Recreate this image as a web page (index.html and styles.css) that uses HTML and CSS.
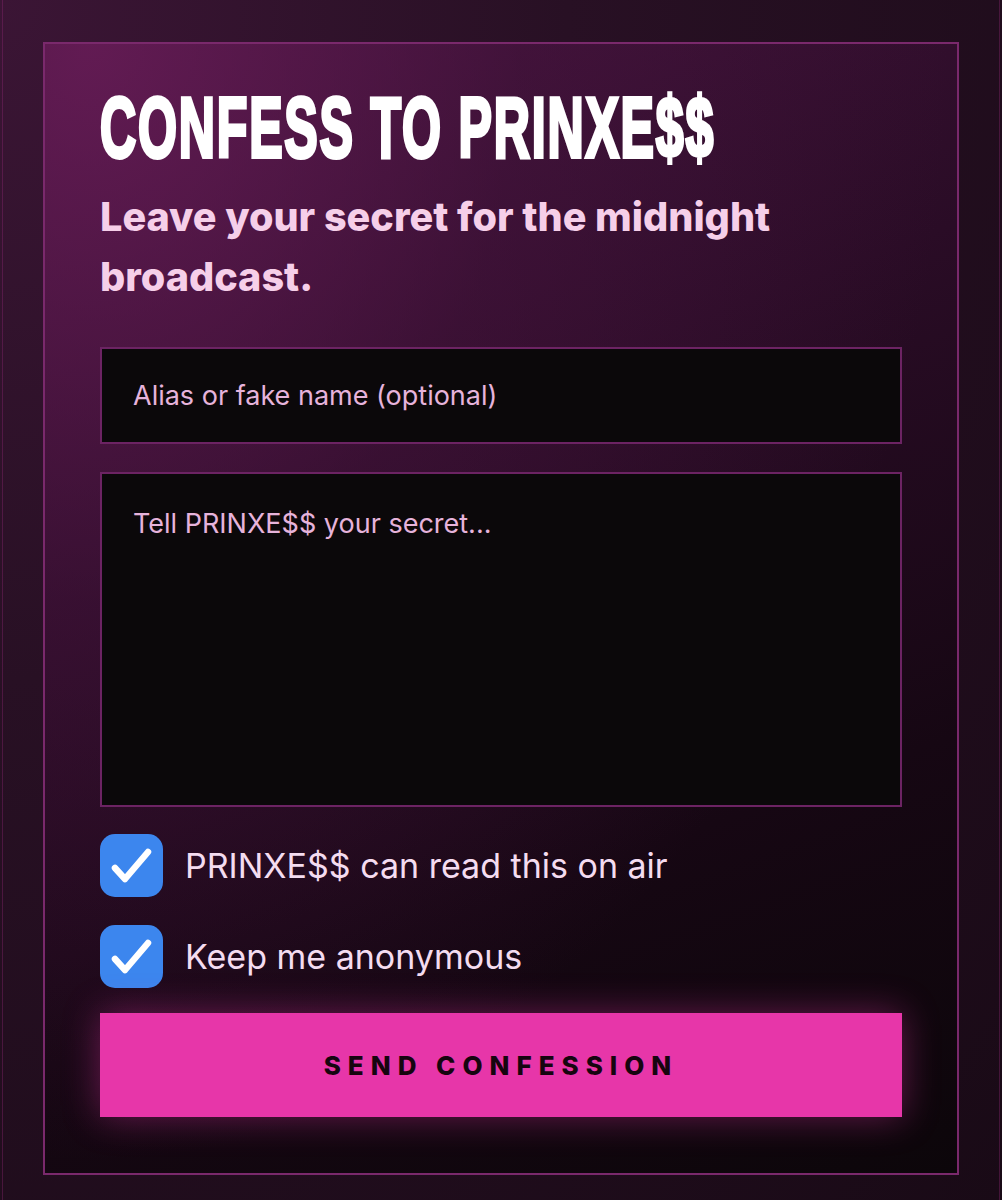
FILE: index.html
```html
<!DOCTYPE html>
<html lang="en">
<head>
    <meta charset="UTF-8">
    <meta name="viewport" content="width=device-width, initial-scale=1.0">
    <title>Confess to PRINXE$$</title>
    <link rel="stylesheet" href="styles.css">
</head>
<body>
    <div class="frame">
        <!-- Confession card -->
        <form class="confess-card" onsubmit="return false">
            <h1 class="confess-title"><span>CONFESS TO PRINXE$$</span></h1>
            <p class="confess-subtitle">Leave your secret for the midnight broadcast.</p>

            <input class="confess-input" type="text" placeholder="Alias or fake name (optional)">
            <textarea class="confess-input confess-textarea" placeholder="Tell PRINXE$$ your secret..."></textarea>

            <label class="confess-check">
                <span class="check-box">
                    <svg viewBox="0 0 63 63" width="63" height="63"><path d="M15 34 L25 45 L48 18" fill="none" stroke="#fff" stroke-width="6.5" stroke-linecap="round" stroke-linejoin="round"/></svg>
                </span>
                <span class="check-label">PRINXE$$ can read this on air</span>
            </label>
            <label class="confess-check">
                <span class="check-box">
                    <svg viewBox="0 0 63 63" width="63" height="63"><path d="M15 34 L25 45 L48 18" fill="none" stroke="#fff" stroke-width="6.5" stroke-linecap="round" stroke-linejoin="round"/></svg>
                </span>
                <span class="check-label">Keep me anonymous</span>
            </label>

            <button class="confess-btn" type="submit">SEND CONFESSION</button>
        </form>
    </div>
</body>
</html>
```

FILE: styles.css
```css
* {
    margin: 0;
    padding: 0;
    box-sizing: border-box;
}

body {
    font-family: 'Inter', 'Liberation Sans', sans-serif;
    background: radial-gradient(ellipse at 0% 0%, #3b1535 0%, #281024 40%, #190a16 100%);
    min-height: 1200px;
}

.frame {
    min-height: 1200px;
    margin: 0 2px;
    border-left: 1px solid rgba(150, 40, 120, 0.35);
    border-right: 1px solid rgba(150, 40, 120, 0.35);
    padding-top: 42px;
}

.confess-card {
    width: 916px;
    margin: 0 auto;
    padding: 34px 55px 56px;
    border: 2px solid #7a296c;
    background:
        radial-gradient(ellipse at 5% 0%, rgba(110, 30, 92, 0.75) 0%, rgba(80, 22, 70, 0.4) 35%, rgba(0, 0, 0, 0) 70%),
        linear-gradient(160deg, #3e1238 0%, #2a0c26 35%, #160713 70%, #0c060a 100%);
    display: flex;
    flex-direction: column;
}

.confess-title {
    font-family: 'Liberation Sans', sans-serif;
    font-weight: 700;
    font-size: 85px;
    line-height: 100px;
    color: #ffffff;
    white-space: nowrap;
    overflow: hidden;
}

.confess-title span {
    display: inline-block;
    transform: scaleX(0.59);
    transform-origin: left center;
    -webkit-text-stroke: 4px #ffffff;
    letter-spacing: 3px;
}

.confess-subtitle {
    margin-top: 9px;
    font-size: 39.6px;
    font-weight: 800;
    line-height: 60px;
    color: #f6cfe9;
    margin-bottom: 40px;
}

.confess-input {
    display: block;
    width: 100%;
    height: 97px;
    padding: 0 31px;
    background: #0b080a;
    border: 2px solid #6c2363;
    border-radius: 0;
    font-family: 'Inter', sans-serif;
    font-size: 27px;
    color: #f3d9ee;
    outline: none;
}

.confess-input::placeholder {
    color: #e6b3db;
}

.confess-textarea {
    height: 335px;
    margin-top: 28px;
    padding: 30px 31px;
    resize: none;
    line-height: 40px;
}

.confess-check {
    display: flex;
    align-items: center;
    gap: 22px;
    margin-top: 27px;
    cursor: pointer;
}

.confess-check + .confess-check {
    margin-top: 28px;
}

.check-box {
    width: 63px;
    height: 63px;
    border-radius: 15px;
    background: #3c86ee;
    display: flex;
    align-items: center;
    justify-content: center;
    flex-shrink: 0;
}

.check-label {
    font-size: 34px;
    color: #f4dcf0;
}

.confess-btn {
    margin-top: 25px;
    height: 104px;
    width: 100%;
    border: none;
    background: #e736a9;
    box-shadow: 0 0 36px rgba(231, 54, 169, 0.4);
    font-family: 'Inter', sans-serif;
    font-weight: 800;
    font-size: 26px;
    letter-spacing: 7px;
    color: #16050f;
    cursor: pointer;
}
```
